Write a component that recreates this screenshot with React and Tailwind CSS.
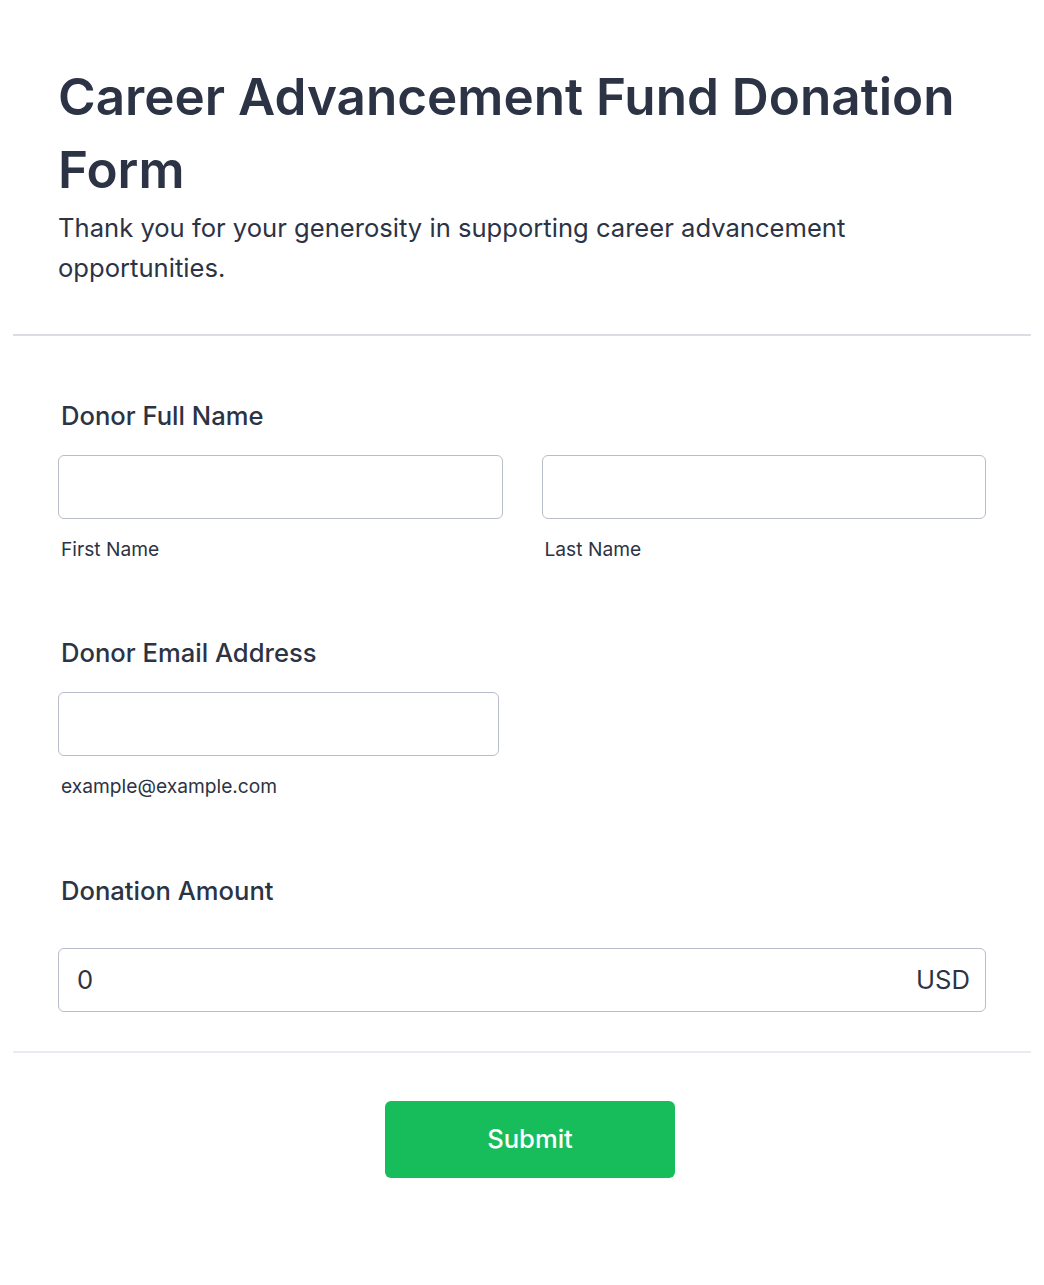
import React, { useState } from 'react'

const App = () => {

  // locale state
  const [firstName, setFirstName] = useState('')
  const [lastName, setLastName] = useState('')
  const [email, setEmail] = useState('')
  const [amount, setAmount] = useState('0')

  const inputClass = 'block w-full h-[64px] px-4 text-[25.6px] text-[#2c3345] bg-white border border-[#b8bdc9] rounded-[6px] outline-none focus:border-[#2e69ff]'

  return (
    <div className="min-h-[1285px] bg-white font-['Inter',sans-serif] text-[#2c3345]">
      <div className="mx-[13px]">

        {/* header */}
        <div className="px-[45px] pt-[60px] pb-[46px] border-b-2 border-[#dadde5]">
          <h1 className="text-[51.2px] leading-[73px] font-semibold">
            Career Advancement Fund Donation Form
          </h1>
          <p className="mt-[2px] text-[25.6px] leading-[40px]">
            Thank you for your generosity in supporting career advancement opportunities.
          </p>
        </div>

        {/* body */}
        <form className="px-[45px] pt-[64px] pb-[39px] border-b-2 border-[#eaebf2]" action="#" onSubmit={e => e.preventDefault()}>

          <div className="mb-[76px]">
            <label className="block ml-[3px] text-[25.6px] leading-[32px] font-medium">Donor Full Name</label>
            <div className="mt-[23px] grid grid-cols-2 gap-[39px]">
              <div>
                <input type="text" className={inputClass} value={firstName} onChange={e => setFirstName(e.target.value)} />
                <span className="block mt-[18px] ml-[3px] text-[19.2px] leading-[24px]">First Name</span>
              </div>
              <div>
                <input type="text" className={inputClass} value={lastName} onChange={e => setLastName(e.target.value)} />
                <span className="block mt-[18px] ml-[3px] text-[19.2px] leading-[24px]">Last Name</span>
              </div>
            </div>
          </div>

          <div className="mb-[77px]">
            <label className="block ml-[3px] text-[25.6px] leading-[32px] font-medium">Donor Email Address</label>
            <div className="mt-[23px] w-[441px]">
              <input type="email" className={inputClass} value={email} onChange={e => setEmail(e.target.value)} />
              <span className="block mt-[18px] ml-[3px] text-[19.2px] leading-[24px]">example@example.com</span>
            </div>
          </div>

          <div>
            <label className="block ml-[3px] text-[25.6px] leading-[32px] font-medium">Donation Amount</label>
            <div className="mt-[41px] flex items-center h-[64px] pl-[18px] pr-[15px] border border-[#b8bdc9] rounded-[6px]">
              <input type="text" className="flex-1 min-w-0 text-[25.6px] text-[#2c3345] outline-none" value={amount} onChange={e => setAmount(e.target.value)} />
              <span className="text-[25.6px] leading-[32px]">USD</span>
            </div>
          </div>

        </form>

        {/* footer */}
        <div className="flex justify-center pt-[48px] pl-[16px]">
          <button type="submit" className="w-[290px] h-[77px] bg-[#18bd5b] rounded-[6px] text-white text-[25.6px] font-medium">
            Submit
          </button>
        </div>

      </div>
    </div>
  )
}

export default App
